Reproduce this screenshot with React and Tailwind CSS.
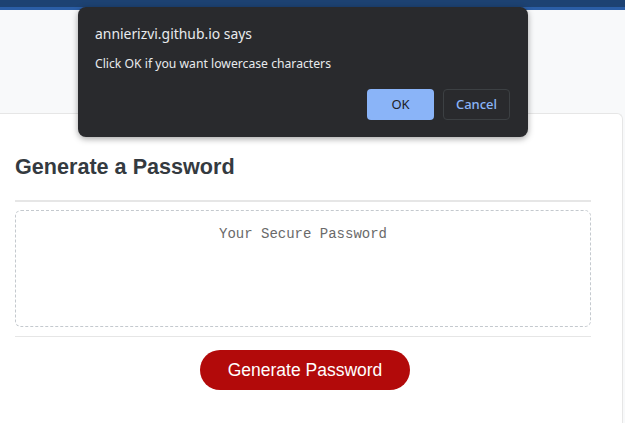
export default function App() {
  return (
    <div className="relative w-[625px] h-[423px] overflow-hidden bg-[#f8f9fa]">
      <div className="h-[7px] bg-[#1d4272]" />
      <div className="h-[3px] bg-[#2b5ea6]" />
      <div className="h-[103px]" />
      <div className="w-[623px] h-[320px] bg-white border-t border-r border-[#e6e6e6] rounded-tr-[6px] pl-[15px] pr-[31px] pt-[40px]">
        <h1 className="text-[21.6px] leading-[26px] font-bold text-[#343a40] font-['Liberation_Sans',Arial,sans-serif]">
          Generate a Password
        </h1>
        <div className="mt-[20px] h-[2px] bg-[#e6e6e6]" />
        <div className="mt-[8px] h-[117px] border border-dashed border-[#c4c9ce] rounded-[6px] pt-[9px] text-center">
          <span className="text-[14px] leading-[20px] text-[#6a6a6a] font-['Liberation_Mono','Courier_New',monospace]">
            Your Secure Password
          </span>
        </div>
        <div className="mt-[9px] h-px bg-[#e6e6e6]" />
        <div className="mt-[13px] pl-[185px]">
          <button className="w-[210px] h-[40px] rounded-full bg-[#b20a0a] text-white text-[17.5px] font-['Liberation_Sans',Arial,sans-serif]">
            Generate Password
          </button>
        </div>
      </div>

      <div className="absolute left-[78px] top-[7px] w-[450px] h-[130px] bg-[#292a2d] rounded-[8px] shadow-[0_2px_6px_rgba(0,0,0,0.35)] pl-[17px] pr-[18px] pt-[17px] font-['Noto_Sans','Open_Sans',sans-serif]">
        <div className="text-[13.9px] leading-[20px] text-[#e8eaed]">annierizvi.github.io says</div>
        <div className="mt-[11px] text-[12.2px] leading-[18px] text-[#e8eaed]">Click OK if you want lowercase characters</div>
        <div className="mt-[16px] flex justify-end gap-[9px]">
          <button className="w-[67px] h-[31px] rounded-[4px] bg-[#8ab4f8] text-[#202124] text-[13px]">OK</button>
          <button className="w-[67px] h-[31px] rounded-[4px] border border-[#3c4043] text-[#8ab4f8] text-[13px] font-medium">Cancel</button>
        </div>
      </div>
    </div>
  );
}
